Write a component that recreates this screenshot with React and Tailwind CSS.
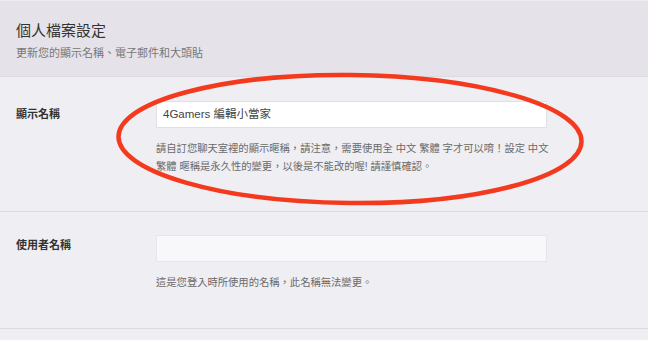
import React from "react";

export default function App() {
  return (
    <div
      className="relative w-[648px] h-[340px] overflow-hidden bg-[#efeef2]"
      style={{ fontFamily: '"Liberation Sans", "Noto Sans CJK TC", sans-serif' }}
    >
      <div className="h-[77px] bg-[#e6e2e9] border-t border-t-[#efedf1] border-b border-b-[#dddae1] px-4 pt-[18px]">
        <div className="text-[15px] leading-[24px] text-[#333]">個人檔案設定</div>
        <div className="text-[11px] leading-[18px] mt-[1px] text-[#777]">更新您的顯示名稱、電子郵件和大頭貼</div>
      </div>

      <div className="flex border-b border-[#dcdadf] pt-6 pb-[35px]">
        <div className="w-[156px] pl-4 pt-[3px] text-[11px] leading-[20px] font-bold text-[#333]">顯示名稱</div>
        <div className="w-[391px]">
          <div className="h-[27px] bg-white border border-[#e2e0e6] flex items-center pl-[6px] text-[11.5px] text-[#444]">
            4Gamers 編輯小當家
          </div>
          <div className="mt-3 text-[10.3px] leading-[18px] text-[#6a6a6a] whitespace-nowrap">
            請自訂您聊天室裡的顯示暱稱，請注意，需要使用全 中文 繁體 字才可以唷！設定 中文
            <br />
            繁體 暱稱是永久性的變更，以後是不能改的喔! 請謹慎確認。
          </div>
        </div>
      </div>

      <div className="flex border-b border-[#dcdadf] pt-[23px] pb-[36px]">
        <div className="w-[156px] pl-4 pt-[0px] text-[11px] leading-[20px] font-bold text-[#333]">使用者名稱</div>
        <div className="w-[391px]">
          <div className="h-[27px] bg-[#f8f7fa] border border-[#e8e6ec]"></div>
          <div className="mt-3 text-[10.3px] leading-[18px] text-[#6a6a6a] whitespace-nowrap">
            這是您登入時所使用的名稱，此名稱無法變更。
          </div>
        </div>
      </div>

      <svg className="absolute inset-0 pointer-events-none" width="648" height="340" viewBox="0 0 648 340">
        <ellipse
          cx="350"
          cy="139"
          rx="231.5"
          ry="64"
          transform="rotate(0.6 350 139)"
          fill="none"
          stroke="#f43a1e"
          strokeWidth="4.5"
        />
      </svg>
    </div>
  );
}
